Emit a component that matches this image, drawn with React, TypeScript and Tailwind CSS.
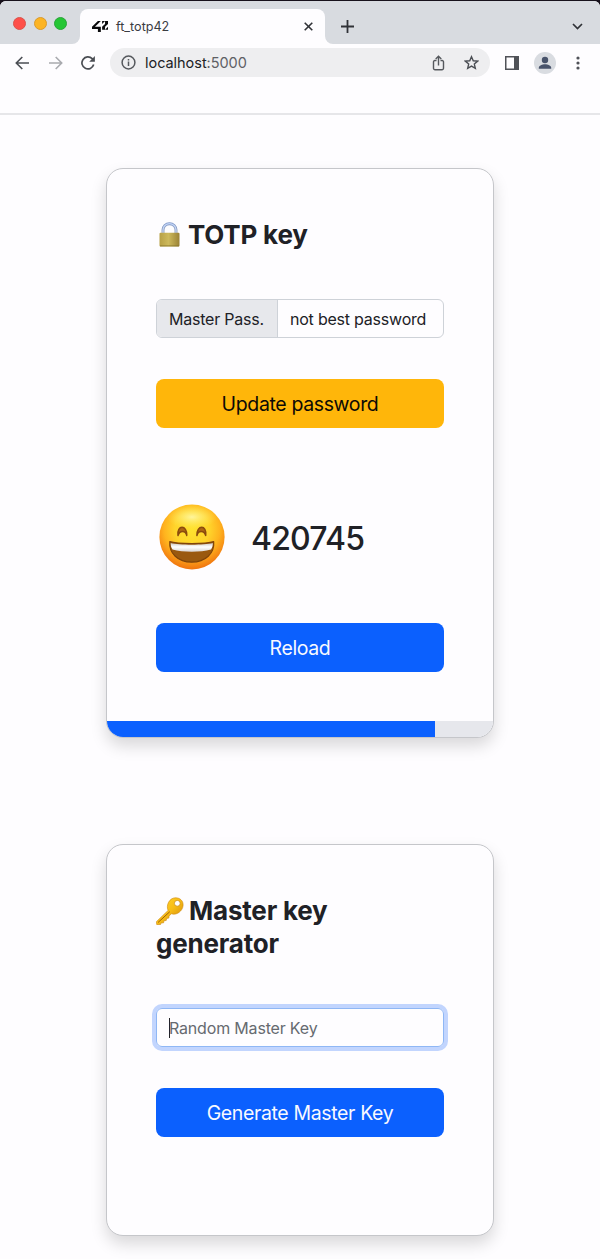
import React from "react";

function Logo42() {
  return (
    <svg className="ml-[12px] h-[11px] w-[16px] shrink-0" viewBox="32 -51.1 896 629.1" preserveAspectRatio="none" fill="#0b0b0d">
      <polygon points="32,412.6 362.1,412.6 362.1,578 526.8,578 526.8,279.1 197.3,279.1 526.8,-51.1 362.1,-51.1 32,279.1" />
      <polygon points="597.9,114.2 762.7,-51.1 597.9,-51.1" />
      <polygon points="762.7,114.2 597.9,279.1 597.9,443.9 762.7,443.9 762.7,279.1 928,114.2 928,-51.1 762.7,-51.1" />
      <polygon points="928,279.1 762.7,443.9 928,443.9" />
    </svg>
  );
}

function TabStrip() {
  return (
    <div className="h-[44px] bg-[#17111b] pt-px">
      <div className="flex h-[43px] overflow-hidden rounded-t-[6px] bg-[#fefdff]">
        <div className="flex w-[80px] shrink-0 gap-[7.5px] rounded-br-[8px] bg-[#d8dbe0] pt-[15.5px] pl-[13px]">
          <span className="size-[13px] rounded-full border border-[#d9544c] bg-[#fe4f49]" />
          <span className="size-[13px] rounded-full border border-[#d99a2c] bg-[#fcb424]" />
          <span className="size-[13px] rounded-full border border-[#2aa43a] bg-[#25c635]" />
        </div>
        <div className="flex w-[245px] shrink-0 bg-[#d8dbe0] pt-[8px]">
          <div className="flex w-full items-center rounded-t-[8px] bg-[#fefdff]">
            <Logo42 />
            <span className="ml-[8px] text-[12.6px] leading-4 text-[#3a3c42]">ft_totp42</span>
            <svg className="mr-[12px] ml-auto size-[9px]" viewBox="0 0 9 9" fill="none" stroke="#303237" strokeWidth="1.6">
              <path d="M.7.7l7.6 7.6M8.3.7L.7 8.3" />
            </svg>
          </div>
        </div>
        <div className="flex flex-1 items-center rounded-bl-[8px] bg-[#d8dbe0] pt-[8px] pr-[17px] pl-[16px]">
          <svg className="size-[13px]" viewBox="0 0 13 13" fill="none" stroke="#303237" strokeWidth="1.8">
            <path d="M6.5 0v13M0 6.5h13" />
          </svg>
          <svg className="ml-auto h-[7px] w-[11px]" viewBox="0 0 11 7" fill="none" stroke="#303237" strokeWidth="1.7">
            <path d="M1 1l4.5 4.5L10 1" />
          </svg>
        </div>
      </div>
    </div>
  );
}

function Toolbar() {
  return (
    <div className="flex h-[69px] items-start pt-[4px] pl-[15px]">
      <div className="flex h-[29px] items-center">
        <svg className="h-[14px] w-[15px]" viewBox="0 0 15 14" fill="none" stroke="#4b4e54" strokeWidth="1.6">
          <path d="M14 7H1.6M7.3 1L1.3 7l6 6" />
        </svg>
        <svg className="ml-[18px] h-[14px] w-[15px]" viewBox="0 0 15 14" fill="none" stroke="#a9abaf" strokeWidth="1.6">
          <path d="M1 7h12.4M7.7 1l6 6-6 6" />
        </svg>
        <svg className="ml-[18px] size-[14px]" viewBox="0 0 14 14" fill="none" stroke="#4b4e54" strokeWidth="1.7">
          <path d="M12.7 8.6A6 6 0 1 1 11.2 2.7L12.6 4.2" />
          <path d="M13.9 0v5.7H8.2z" fill="#4b4e54" stroke="none" />
        </svg>
      </div>
      <div className="ml-[15px] flex h-[29px] w-[380px] items-center rounded-full bg-[#eeeef0] pr-[11px] pl-[11px]">
        <svg className="size-[15px]" viewBox="0 0 15 15" fill="none" stroke="#55585d" strokeWidth="1.5">
          <circle cx="7.5" cy="7.5" r="6.4" />
          <path d="M7.5 6.6v4.3M7.5 3.9v1.5" />
        </svg>
        <span className="ml-[9px] text-[14.5px] leading-5 tracking-[-0.04px] text-[#202125]">
          localhost<span className="text-[#5e6065]">:5000</span>
        </span>
        <svg className="ml-auto h-[16px] w-[13px]" viewBox="0 0 13 16" fill="none" stroke="#55585d" strokeWidth="1.4">
          <path d="M4.500 5.500H2.800A1.300 1.300 0 0 0 1.500 6.800v6.400a1.500 1.500 0 0 0 1.500 1.500h7a1.500 1.500 0 0 0 1.500-1.500V6.800a1.300 1.300 0 0 0-1.300-1.300H8.500M6.500 10.500V1.500M3.700 4l2.800-2.700L9.300 4" />
        </svg>
        <svg className="ml-[19px] size-[15px]" viewBox="0 0 15 15" fill="none" stroke="#4b4e54" strokeWidth="1.4">
          <path d="M7.500 1.700l1.750 4.050 4.400.4-3.330 2.900 1 4.300L7.500 11.050l-3.820 2.300 1-4.300-3.330-2.900 4.400-.4z" />
        </svg>
      </div>
      <div className="flex h-[29px] items-center">
        <svg className="ml-[15px] size-[14px]" viewBox="0 0 14 14">
          <path d="M0 0h14v14H0z" fill="#505258" />
          <path d="M1.500 1.500h7.500v11H1.500z" fill="#fefdff" />
        </svg>
        <svg className="ml-[15px] size-[22px]" viewBox="0 0 22 22">
          <circle cx="11" cy="11" r="11" fill="#d9dce1" />
          <circle cx="11" cy="8" r="3.200" fill="#48536b" />
          <path d="M4.800 16.800v-1.100c0-2.200 3.500-3.500 6.200-3.500s6.200 1.300 6.200 3.500v1.100z" fill="#48536b" />
        </svg>
        <svg className="ml-[19.5px] h-[14px] w-[4px]" viewBox="0 0 4 14" fill="#505258">
          <circle cx="2" cy="2" r="1.600" />
          <circle cx="2" cy="7" r="1.600" />
          <circle cx="2" cy="12" r="1.600" />
        </svg>
      </div>
    </div>
  );
}

function LockIcon() {
  return (
    <svg className="ml-[3px] h-[25px] w-[21px] shrink-0" viewBox="0 0 21 25">
      <defs>
        <linearGradient id="brass" x1="0" x2="1">
          <stop offset="0" stopColor="#b7a045" />
          <stop offset=".45" stopColor="#cdb95c" />
          <stop offset="1" stopColor="#9a8236" />
        </linearGradient>
        <linearGradient id="steel" x1="0" x2="0" y1="0" y2="1">
          <stop offset="0" stopColor="#7f98c8" />
          <stop offset="1" stopColor="#9fa8b8" />
        </linearGradient>
      </defs>
      <path d="M4 12V7.900a6.500 6.200 0 0 1 13 0V12" fill="none" stroke="url(#steel)" strokeWidth="3" />
      <path d="M4 11V7.900a6.500 6.200 0 0 1 13 0V11" fill="none" stroke="#c3d4f6" strokeWidth="1.300" />
      <rect x=".5" y="10.700" width="20" height="13.800" rx="1" fill="url(#brass)" />
      <path d="M1 23.900h19" stroke="#86732a" strokeWidth=".8" />
    </svg>
  );
}

function KeyIcon() {
  return (
    <svg className="inline-block h-[28px] w-[28px] align-[-5px]" viewBox="0 0 28 28">
      <defs>
        <linearGradient id="gold" x1="0" x2="1" y1="0" y2="1">
          <stop offset="0" stopColor="#ffd735" />
          <stop offset=".5" stopColor="#f8bd16" />
          <stop offset="1" stopColor="#c87d08" />
        </linearGradient>
      </defs>
      <path d="M12.100 13.400C9.800 8.500 13.200 1 19.200.8c4.800-.2 8.200 3.100 7.900 7.500-.4 5.800-6.500 10.300-11.700 8.500l-2.300 2.100-.3 2.200-2.100.3-.5 2.100-2.200.2-.4 2.100-2.600.2-.4 1.500-3.800.2-.5-2.900z" fill="url(#gold)" stroke="#cc8810" strokeWidth=".6" />
      <path d="M2 25.500L13.800 14.700" stroke="#9b5d08" strokeWidth="1" />
      <circle cx="21.300" cy="6.300" r="2.900" fill="#fff" stroke="#c7840d" strokeWidth=".7" />
    </svg>
  );
}

function GrinIcon() {
  return (
    <svg className="ml-[3px] size-[66px] shrink-0" viewBox="0 0 66 66">
      <defs>
        <radialGradient id="face" cx=".5" cy=".38" r=".63">
          <stop offset="0" stopColor="#ffe22e" />
          <stop offset=".42" stopColor="#ffd42b" />
          <stop offset=".68" stopColor="#ffb31e" />
          <stop offset="1" stopColor="#ef6f0e" />
        </radialGradient>
        <radialGradient id="shine" cx=".5" cy=".5" r=".5">
          <stop offset="0" stopColor="#fffcb8" stopOpacity=".8" />
          <stop offset="1" stopColor="#fff36a" stopOpacity="0" />
        </radialGradient>
        <linearGradient id="teeth" x1="0" x2="0" y1="0" y2="1">
          <stop offset="0" stopColor="#c9c6c4" />
          <stop offset=".45" stopColor="#fff" />
          <stop offset="1" stopColor="#d9d6d4" />
        </linearGradient>
      </defs>
      <circle cx="33" cy="33" r="32.600" fill="url(#face)" />
      <ellipse cx="33" cy="13" rx="25" ry="12" fill="url(#shine)" />
      <path d="M19 31.500c-1.400-11 9.200-11 8.800 0-1.300-5.200-7-5.400-8.800 0zM37.900 31.500c-.4-11 10.200-11 8.800 0-1.800-5.400-7.500-5.200-8.800 0z" fill="#ae6612" stroke="#8b4b0d" strokeWidth="1.500" strokeLinejoin="round" />
      <path d="M10.800 37.600c7.500 2.600 36.400 2.600 43.900 0 1 11.700-8.200 20.600-22 20.600S9.800 49.300 10.800 37.600z" fill="#9a590f" stroke="#7e430a" strokeWidth="1.200" strokeLinejoin="round" />
      <path d="M11.700 39c8.200 2.300 33.900 2.300 42.100 0 .1 2.600-.5 4.600-1.800 6.500-10.500 3-28 3-38.500 0-1.300-1.900-1.900-3.900-1.800-6.500z" fill="url(#teeth)" />
    </svg>
  );
}

function Button({ tone, className, children }: { tone: "blue" | "amber"; className: string; children: React.ReactNode }) {
  const colors = tone === "blue" ? "bg-[#0b60fe] text-[#f8f9ff]" : "bg-[#ffb60a] text-[#0c0a06]";
  return (
    <button className={"flex h-[49px] w-full items-center justify-center rounded-[8px] pt-px text-[19.5px] leading-[30px] tracking-[-0.37px] " + colors + " " + className}>
      {children}
    </button>
  );
}

const cardClass =
  "mx-auto flex w-[388px] flex-col overflow-hidden rounded-[17px] border border-[#c5c6ca] bg-[#fefdff] shadow-[0_8px_16px_rgba(0,0,0,0.15)]";

export default function App() {
  return (
    <div className="h-[1259px] w-[600px] overflow-hidden bg-[#fefdff] font-['Inter','Liberation_Sans',sans-serif] text-[#202126]">
      <TabStrip />
      <Toolbar />
      <main className="border-t-2 border-[#e6e6e9] pt-[53px]">
        <section className={cardClass + " h-[570px]"}>
          <div className="flex flex-1 flex-col px-[49px] pt-[49px]">
            <h1 className="flex h-[33px] items-center text-[26px] leading-[33px] font-bold tracking-[-0.2px]">
              <LockIcon />
              <span className="ml-[8px]">TOTP key</span>
            </h1>
            <div className="mt-[48px] flex h-[39px] overflow-hidden rounded-[6px] border border-[#ced2d8] text-[16px] tracking-[-0.22px]">
              <span className="flex w-[121px] shrink-0 items-center border-r border-[#ced2d8] bg-[#e7e8ec] pl-[12px] whitespace-nowrap">Master Pass.</span>
              <span className="flex items-center pl-[12px] whitespace-nowrap">not best password</span>
            </div>
            <Button tone="amber" className="mt-[41px]">Update password</Button>
            <div className="mt-[76px] flex h-[66px] items-center">
              <GrinIcon />
              <span className="ml-[26px] pt-[3px] text-[32px] leading-[40px] font-medium tracking-[-0.8px]">420745</span>
            </div>
            <Button tone="blue" className="mt-[53px]">Reload</Button>
          </div>
          <div className="h-[16px] bg-[#e6e7ec]">
            <div className="h-full w-[328px] bg-[#0b60fe]" />
          </div>
        </section>
        <section className={cardClass + " mt-[106px] h-[392px] px-[49px] pt-[50px]"}>
          <h2 className="w-[230px] text-[26px] leading-[32.5px] font-bold tracking-[-0.2px]">
            <KeyIcon />
            <span className="ml-[5px]">Master key</span>
            <br />
            generator
          </h2>
          <div className="mt-[48px] flex h-[39px] shrink-0 items-center rounded-[6px] border border-[#8fb7f5] pl-[12px] text-[16px] tracking-[-0.18px] text-[#666a70] shadow-[0_0_0_4px_#c2d5fe]">
            <span className="h-[20px] w-px bg-[#222328]" />
            <span className="-ml-px">Random Master Key</span>
          </div>
          <Button tone="blue" className="mt-[41px] shrink-0">Generate Master Key</Button>
        </section>
      </main>
    </div>
  );
}
